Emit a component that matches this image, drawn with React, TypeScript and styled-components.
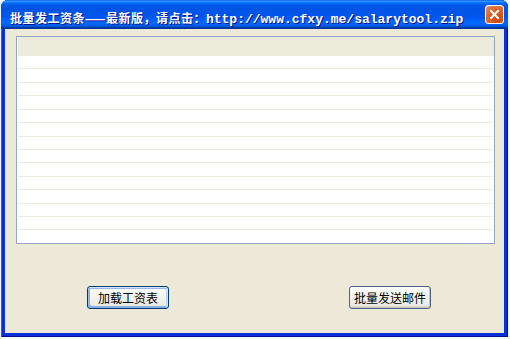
import React from 'react';
import styled, { createGlobalStyle } from 'styled-components';

const GlobalStyle = createGlobalStyle`
  html, body {
    margin: 0;
    padding: 0;
    background: #ffffff;
  }
  body {
    font-family: "Noto Sans CJK SC", "Liberation Sans", sans-serif;
  }
`;

const Desktop = styled.div`
  width: 510px;
  height: 339px;
  box-sizing: border-box;
  padding: 0 2px 2px 1px;
  overflow: hidden;
  background: #f4f6fb;
`;

const Window = styled.div`
  width: 507px;
  height: 337px;
  display: flex;
  flex-direction: column;
  background: #0831d9;
  border-radius: 7px 7px 0 0;
  box-shadow: inset 1px 0 #166aee, inset -1px 0 #00138c, inset 0 -1px #00138c;
  overflow: hidden;
`;

const TitleBar = styled.div`
  height: 29px;
  flex: none;
  display: flex;
  align-items: center;
  justify-content: space-between;
  padding: 0 4px 0 9px;
  background: linear-gradient(
    180deg,
    #0058ee 0%,
    #3593ff 4%,
    #288eff 6%,
    #127dff 8%,
    #036ffc 10%,
    #0262ee 14%,
    #0057e5 20%,
    #0054e3 24%,
    #0055eb 56%,
    #005bf5 66%,
    #026afe 76%,
    #0062ef 86%,
    #0052d6 92%,
    #0040ab 94%,
    #003092 100%
  );
`;

const Title = styled.div`
  color: #fff;
  font-weight: bold;
  white-space: nowrap;
  text-shadow: 1px 1px #0f1089;
  padding-top: 3px;
`;

const TitleCn = styled.span`
  font-family: "Noto Sans CJK SC", sans-serif;
  font-size: 12px;
  letter-spacing: 0.5px;
`;

const TitleUrl = styled.span`
  font-family: "Liberation Mono", monospace;
  font-size: 13px;
`;

const CloseButton = styled.div`
  width: 19px;
  height: 19px;
  box-sizing: border-box;
  border: 1px solid #fff;
  border-radius: 3px;
  background: radial-gradient(circle at 70% 75%, #cc4600 0%, #dc6527 55%, #e27b52 80%, #f0a88a 100%);
  display: flex;
  align-items: center;
  justify-content: center;
`;

const Body = styled.div`
  flex: 1;
  margin: 0 4px 4px;
  background: #ece9d8;
  padding: 7px 9px 0 11px;
  display: flex;
  flex-direction: column;
`;

const List = styled.div`
  height: 208px;
  box-sizing: border-box;
  border: 1px solid #8fa6bc;
  background: #fff;
  display: flex;
  flex-direction: column;
`;

const ListHeader = styled.div`
  height: 19px;
  flex: none;
  background: #ebeadb;
  margin-left: 1px;
`;

const ListBody = styled.div`
  flex: 1;
  display: flex;
  flex-direction: column;
  padding: 0 1px;
`;

const Row = styled.div<{ $last?: boolean }>`
  flex: 1;
  border-bottom: ${(p) => (p.$last ? 'none' : '1px solid #ecebe1')};
`;

const ButtonRow = styled.div`
  display: flex;
  justify-content: space-between;
  margin-top: 42px;
  padding: 0 64px 0 71px;
`;

const Button = styled.button<{ $default?: boolean }>`
  width: 82px;
  height: 23px;
  padding: 0;
  border: 1px solid ${(p) => (p.$default ? '#003c74' : '#4a6283')};
  border-radius: 3px;
  font-family: "Noto Sans CJK SC", sans-serif;
  font-size: 12px;
  color: #000;
  background: linear-gradient(180deg, #ffffff 0%, #f3f2ee 50%, #ecebe6 86%, #d6d0c5 100%);
  box-shadow: ${(p) =>
    p.$default
      ? 'inset -1px 1px #cee7ff, inset 1px 2px #98b8ea, inset -2px 2px #bcd4f6, inset 1px -1px #89ade4, inset 2px -2px #89ade4'
      : 'inset -1px -1px #c9c6ba'};
`;

const ROWS = 14;

export default function App() {
  return (
    <>
      <GlobalStyle />
      <Desktop>
        <Window>
          <TitleBar>
            <Title>
              <TitleCn>批量发工资条——最新版，请点击：</TitleCn>
              <TitleUrl>http://www.cfxy.me/salarytool.zip</TitleUrl>
            </Title>
            <CloseButton>
              <svg width="11" height="11" viewBox="0 0 11 11">
                <path d="M2 2 L9 9 M9 2 L2 9" stroke="#fff" strokeWidth="2" strokeLinecap="square" />
              </svg>
            </CloseButton>
          </TitleBar>
          <Body>
            <List>
              <ListHeader />
              <ListBody>
                {Array.from({ length: ROWS }).map((_, i) => (
                  <Row key={i} $last={i === ROWS - 1} />
                ))}
              </ListBody>
            </List>
            <ButtonRow>
              <Button $default>加载工资表</Button>
              <Button>批量发送邮件</Button>
            </ButtonRow>
          </Body>
        </Window>
      </Desktop>
    </>
  );
}
